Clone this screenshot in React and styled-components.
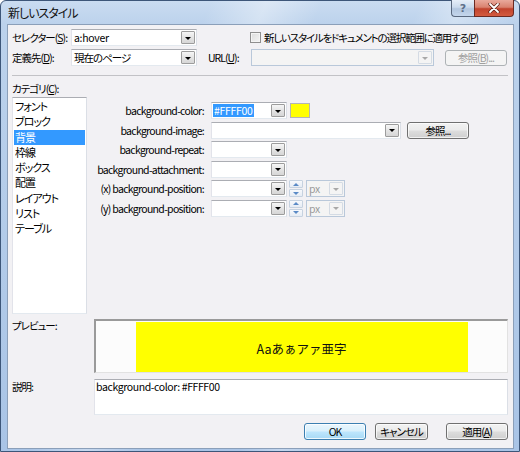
import React from "react";
import styled, { createGlobalStyle, css } from "styled-components";

const FONT = `"Noto Sans CJK JP", "Noto Sans", sans-serif`;

const GlobalStyle = createGlobalStyle`
  html, body { margin: 0; padding: 0; background: #fff; }
  body { width: 520px; height: 452px; overflow: hidden; }
  * { box-sizing: border-box; }
`;

const Window = styled.div`
  width: 520px;
  height: 452px;
  border: 1px solid #3d5679;
  border-radius: 6px 6px 0 0;
  background:
    linear-gradient(112deg, rgba(255,255,255,0) 30%, rgba(255,255,255,0.35) 38%, rgba(255,255,255,0) 46%, rgba(255,255,255,0) 60%, rgba(255,255,255,0.3) 66%, rgba(255,255,255,0) 74%),
    linear-gradient(180deg, #cadcf1 0px, #bcd2ec 23px, #a9c4e6 100%);
  padding: 0 5px 2px 6px;
  display: flex;
  flex-direction: column;
  font-family: ${FONT};
  font-size: 10.5px;
  letter-spacing: -1px;
  color: #000;
  font-feature-settings: "palt";
`;

const TitleBar = styled.div`
  height: 23px;
  display: flex;
  align-items: flex-start;
`;

const Title = styled.div`
  margin-top: 4px;
  padding-left: 1px;
  font-size: 12px;
  line-height: 15px;
  color: #111;
`;

const CaptionButtons = styled.div`
  margin-left: auto;
  margin-top: -1px;
  display: flex;
`;

const CaptionBtn = styled.div`
  height: 17px;
  width: ${(p) => p.$w}px;
  display: flex;
  align-items: center;
  justify-content: center;
  border: 1px solid #59677d;
  border-top: none;
  letter-spacing: 0;
  ${(p) =>
    p.$close
      ? css`
          border-color: #6b2a22;
          border-radius: 0 0 4px 0;
          background: linear-gradient(180deg, #e9a99c 0%, #d9826f 45%, #c1432d 55%, #d35b3f 100%);
        `
      : css`
          border-right: none;
          border-radius: 0 0 0 4px;
          background: linear-gradient(180deg, #e6eef8 0%, #cbdaec 45%, #b2c6df 55%, #c4d6ec 100%);
          color: #5d6f8a;
          font-family: "DejaVu Sans", sans-serif;
          font-weight: bold;
          font-size: 11px;
        `}
`;

const Client = styled.div`
  flex: 1;
  background: #f2f1f4;
  border: 1px solid #8b9fb9;
  padding: 4px 5px 0 4px;
  display: flex;
  flex-direction: column;
`;

const Row = styled.div`
  display: flex;
  align-items: center;
  height: 17px;
  margin-top: ${(p) => p.$mt || 0}px;
`;

const Label = styled.div`
  width: ${(p) => (p.$w ? `${p.$w}px` : "auto")};
  margin-left: ${(p) => p.$ml || 0}px;
  flex-shrink: 0;
  white-space: nowrap;
  line-height: 13px;
`;

const U = styled.span`
  text-decoration: underline;
  text-underline-offset: 1px;
`;

const Combo = styled.div`
  width: ${(p) => p.$w}px;
  height: 17px;
  flex-shrink: 0;
  display: flex;
  align-items: center;
  padding: 0 1px 0 2px;
  border: 1px solid #abadb3;
  border-color: #abadb3 #dbdfe6 #e3e9ef #e2e3ea;
  background: #fff;
  margin-left: ${(p) => p.$ml || 0}px;
  white-space: nowrap;
  ${(p) =>
    p.$disabled &&
    css`
      background: #f4f4f4;
      border-color: #b9c8da;
      color: #9a9a9a;
    `}
`;

const ComboText = styled.span`
  line-height: 13px;
  letter-spacing: ${(p) => (p.$latin ? "-0.3px" : "-1px")};
  ${(p) =>
    p.$selected &&
    css`
      background: #3399ff;
      color: #fff;
      padding: 0 1px;
      margin-left: -1px;
    `}
`;

const DropBtn = styled.div`
  margin-left: auto;
  width: 14px;
  height: 13px;
  display: flex;
  align-items: center;
  justify-content: center;
  border: 1px solid #9c9c9c;
  border-radius: 1px;
  background: linear-gradient(180deg, #f6f6f6 0%, #e4e4e4 50%, #d6d6d6 100%);
  ${(p) =>
    p.$disabled &&
    css`
      border-color: #d4dbe4;
      background: #f4f4f4;
    `}
`;

const Arrow = styled.span`
  width: 0;
  height: 0;
  border-left: 3px solid transparent;
  border-right: 3px solid transparent;
  border-top: 3px solid ${(p) => (p.$disabled ? "#a8a8a8" : "#000")};
  margin-top: 1px;
`;

const Button = styled.div`
  width: ${(p) => p.$w}px;
  height: ${(p) => p.$h || 17}px;
  margin-left: ${(p) => p.$ml || 0}px;
  flex-shrink: 0;
  display: flex;
  align-items: center;
  justify-content: center;
  border: 1px solid #707070;
  border-radius: 3px;
  background: linear-gradient(180deg, #f2f2f2 0%, #ebebeb 48%, #dddddd 52%, #cfcfcf 100%);
  box-shadow: inset 0 0 0 1px rgba(255, 255, 255, 0.7);
  white-space: nowrap;
  line-height: 13px;
  ${(p) =>
    p.$default &&
    css`
      border-color: #3c7fb1;
      background: linear-gradient(180deg, #eaf6fd 0%, #d9f0fc 48%, #bee6fd 52%, #a7d9f5 100%);
      box-shadow: inset 0 0 0 1px rgba(255, 255, 255, 0.8);
    `}
  ${(p) =>
    p.$disabled &&
    css`
      border-color: #adb2b5;
      background: #f4f4f4;
      color: #a0a0a0;
      box-shadow: none;
    `}
`;

const Check = styled.span`
  width: 11px;
  height: 11px;
  flex-shrink: 0;
  border: 1px solid #8f8f8f;
  background: linear-gradient(135deg, #dcdcdc 0%, #f4f4f4 100%);
  box-shadow: inset 0 0 0 1px #f4f4f4;
  margin-right: 3px;
`;

const CheckWrap = styled.div`
  display: flex;
  align-items: center;
  margin-left: 53px;
  white-space: nowrap;
  line-height: 13px;
  letter-spacing: -1.2px;
`;

const Separator = styled.div`
  height: 1px;
  background: #c2c2c6;
  margin-top: 9px;
`;

const SectionLabel = styled.div`
  margin-top: 6px;
  height: 14px;
  line-height: 14px;
`;

const Main = styled.div`
  margin-top: 1px;
  height: 217px;
  display: flex;
  flex-shrink: 0;
`;

const ListBox = styled.div`
  width: 75px;
  height: 217px;
  flex-shrink: 0;
  background: #fff;
  border: 1px solid #828790;
  border-color: #abadb3 #dbdfe6 #e3e9ef #e2e3ea;
  padding: 1px 1px 0 1px;
`;

const ListItem = styled.div`
  height: 15.3px;
  line-height: 15px;
  padding-left: 1px;
  font-size: 11px;
  ${(p) =>
    p.$selected &&
    css`
      background: #3399ff;
      color: #fff;
    `}
`;

const PropGrid = styled.div`
  display: grid;
  grid-template-columns: 117px auto;
  grid-auto-rows: 17px;
  column-gap: 7px;
  row-gap: 2.6px;
  padding-top: 5px;
  align-content: start;
`;

const PropLabel = styled.div`
  text-align: right;
  align-self: center;
  line-height: 13px;
  letter-spacing: -0.7px;
  white-space: nowrap;
`;

const PropField = styled.div`
  display: flex;
  align-items: center;
`;

const Swatch = styled.div`
  width: 20px;
  height: 15px;
  margin-left: 3px;
  background: #ffff00;
  border: 1px solid #b4b4b4;
`;

const Spinner = styled.div`
  width: 14px;
  height: 17px;
  margin-left: 2px;
  display: flex;
  flex-direction: column;
  gap: 1px;
`;

const SpinHalf = styled.div`
  flex: 1;
  display: flex;
  align-items: center;
  justify-content: center;
  border: 1px solid #c6d2e0;
  background: linear-gradient(180deg, #f7f9fc, #e6ecf4);
  border-radius: 1px;
`;

const SpinArrow = styled.span`
  width: 0;
  height: 0;
  border-left: 3px solid transparent;
  border-right: 3px solid transparent;
  ${(p) =>
    p.$up
      ? css`border-bottom: 3px solid #5a8ac6;`
      : css`border-top: 3px solid #5a8ac6;`}
`;

const BottomRow = styled.div`
  display: flex;
  margin-top: ${(p) => p.$mt}px;
  flex-shrink: 0;
`;

const SideLabel = styled.div`
  width: 82px;
  flex-shrink: 0;
  line-height: 13px;
  padding-top: ${(p) => p.$pt || 0}px;
`;

const PreviewBox = styled.div`
  flex: 1;
  height: 54px;
  display: flex;
  justify-content: center;
  background: #fcfcfc;
  border-top: 2px solid #9a9a9a;
  border-left: 2px solid #9a9a9a;
  border-right: 1px solid #e2e2e2;
  border-bottom: 1px solid #e2e2e2;
  padding-top: 1px;
`;

const PreviewSample = styled.div`
  width: 332px;
  background: #ffff00;
  display: flex;
  align-items: center;
  justify-content: center;
  font-size: 12.5px;
  letter-spacing: 0;
  font-feature-settings: normal;
  color: #111;
  padding-top: 2px;
`;

const DescBox = styled.div`
  flex: 1;
  height: 36px;
  background: #fff;
  border: 1px solid #abadb3;
  border-color: #abadb3 #dbdfe6 #e3e9ef #e2e3ea;
  padding: 1px 1px;
  line-height: 12px;
  letter-spacing: -0.4px;
`;

const ButtonRow = styled.div`
  display: flex;
  justify-content: flex-end;
  margin-top: 8px;
`;

function DropCombo({ w, ml, children, selected, disabled, latin }) {
  return (
    <Combo $w={w} $ml={ml} $disabled={disabled}>
      {children != null && (
        <ComboText $selected={selected} $latin={latin}>
          {children}
        </ComboText>
      )}
      <DropBtn $disabled={disabled}>
        <Arrow $disabled={disabled} />
      </DropBtn>
    </Combo>
  );
}

function Spin() {
  return (
    <Spinner>
      <SpinHalf>
        <SpinArrow $up />
      </SpinHalf>
      <SpinHalf>
        <SpinArrow />
      </SpinHalf>
    </Spinner>
  );
}

const categories = ["フォント", "ブロック", "背景", "枠線", "ボックス", "配置", "レイアウト", "リスト", "テーブル"];

export default function App() {
  return (
    <>
      <GlobalStyle />
      <Window>
        <TitleBar>
          <Title>新しいスタイル</Title>
          <CaptionButtons>
            <CaptionBtn $w={23}>?</CaptionBtn>
            <CaptionBtn $w={40} $close>
              <svg width="12" height="10" viewBox="0 0 12 10">
                <path d="M2 1 L10 9 M10 1 L2 9" stroke="#5a1d14" strokeWidth="3.2" strokeLinecap="round" />
                <path d="M2 1 L10 9 M10 1 L2 9" stroke="#fff" strokeWidth="1.8" strokeLinecap="round" />
              </svg>
            </CaptionBtn>
          </CaptionButtons>
        </TitleBar>
        <Client>
          <Row>
            <Label $w={59}>
              セレクター(<U>S</U>):
            </Label>
            <DropCombo w={126} latin>
              a:hover
            </DropCombo>
            <CheckWrap>
              <Check />
              新しいスタイルをドキュメントの選択範囲に適用する(<U>P</U>)
            </CheckWrap>
          </Row>
          <Row $mt={3}>
            <Label $w={59}>
              定義先(<U>D</U>):
            </Label>
            <DropCombo w={126}>現在のページ</DropCombo>
            <Label $w={43} $ml={11}>
              URL(<U>U</U>):
            </Label>
            <DropCombo w={183} disabled />
            <Button $w={62} $h={16} $ml={11} $disabled>
              参照(<U>B</U>)...
            </Button>
          </Row>
          <Separator />
          <SectionLabel>
            カテゴリ(<U>C</U>):
          </SectionLabel>
          <Main>
            <ListBox>
              {categories.map((c) => (
                <ListItem key={c} $selected={c === "背景"}>
                  {c}
                </ListItem>
              ))}
            </ListBox>
            <PropGrid>
              <PropLabel>background-color:</PropLabel>
              <PropField>
                <DropCombo w={76} selected latin>
                  #FFFF00
                </DropCombo>
                <Swatch />
              </PropField>
              <PropLabel>background-image:</PropLabel>
              <PropField>
                <DropCombo w={190} />
                <Button $w={62} $ml={6}>
                  参照...
                </Button>
              </PropField>
              <PropLabel>background-repeat:</PropLabel>
              <PropField>
                <DropCombo w={76} />
              </PropField>
              <PropLabel>background-attachment:</PropLabel>
              <PropField>
                <DropCombo w={76} />
              </PropField>
              <PropLabel>(x) background-position:</PropLabel>
              <PropField>
                <DropCombo w={76} />
                <Spin />
                <DropCombo w={39} ml={3} disabled latin>
                  px
                </DropCombo>
              </PropField>
              <PropLabel>(y) background-position:</PropLabel>
              <PropField>
                <DropCombo w={76} />
                <Spin />
                <DropCombo w={39} ml={3} disabled latin>
                  px
                </DropCombo>
              </PropField>
            </PropGrid>
          </Main>
          <BottomRow $mt={5}>
            <SideLabel>プレビュー:</SideLabel>
            <PreviewBox>
              <PreviewSample>Aaあぁアァ亜字</PreviewSample>
            </PreviewBox>
          </BottomRow>
          <BottomRow $mt={6}>
            <SideLabel $pt={1}>説明:</SideLabel>
            <DescBox>background-color: #FFFF00</DescBox>
          </BottomRow>
          <ButtonRow>
            <Button $w={62} $default>
              OK
            </Button>
            <Button $w={53} $ml={9}>
              キャンセル
            </Button>
            <Button $w={62} $ml={18}>
              適用(<U>A</U>)
            </Button>
          </ButtonRow>
        </Client>
      </Window>
    </>
  );
}
